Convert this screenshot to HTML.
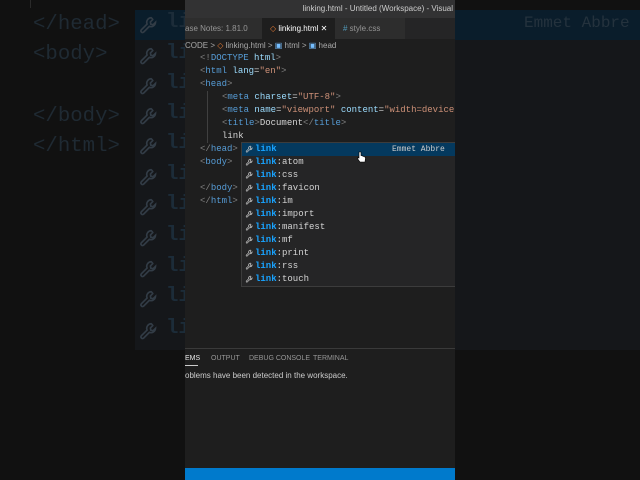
<!DOCTYPE html>
<html><head><style>
*{margin:0;padding:0;box-sizing:border-box}
body{width:640px;height:480px;background:#111;position:relative;overflow:hidden;font-family:"Liberation Sans",sans-serif}
.m{font-family:"Liberation Mono",monospace}
.abs{position:absolute;white-space:nowrap}
.bg{left:0;font-size:20.7px;color:#1f2a33;line-height:30px}
#c{position:absolute;left:185px;top:0;width:270px;height:480px;background:#1e1e1e;overflow:hidden}
.cl{position:absolute;font-size:9px;line-height:13px;color:#d4d4d4;white-space:nowrap;font-family:"Liberation Mono",monospace}
.t{color:#569cd6}.g{color:#808080}.a{color:#9cdcfe}.s{color:#ce9178}
#sg{position:absolute;left:56px;top:142px;width:220px;height:145px;background:#252526;border:1px solid #3c3c3c}
.r{height:13px;line-height:13px;font-size:9px;font-family:"Liberation Mono",monospace;color:#d4d4d4;padding-left:13px;position:relative}
.r b{font-weight:bold;color:#18a3ff}
.r svg{position:absolute;left:3px;top:2px}
</style></head><body>
<div class="abs" style="left:135px;top:10px;width:505px;height:340px;background:#15171a"></div>
<div class="abs" style="left:135px;top:10px;width:505px;height:30px;background:#0a1d2b"></div>
<div class="abs m" style="left:524px;top:14px;font-size:16px;color:#24323d">Emmet Abbre</div>
<div class="abs m bg" style="left:33px;top:10px">&lt;/head&gt;</div>
<div class="abs m bg" style="left:33px;top:40px">&lt;body&gt;</div>
<div class="abs m bg" style="left:33px;top:102px">&lt;/body&gt;</div>
<div class="abs m bg" style="left:33px;top:132px">&lt;/html&gt;</div>
<div id="wrs"></div>
<div class="abs" style="left:30px;top:0;width:1px;height:8px;background:#2a2a2a"></div>

<div id="c">
<div class="abs" style="left:0;top:0;width:270px;height:18px;background:#323233;color:#ccc;font-size:8px;line-height:18px;text-align:right;padding-right:2px">linking.html - Untitled (Workspace) - Visual</div>
<div class="abs" style="left:0;top:18px;width:270px;height:21px;background:#252526"></div>
<div class="abs" style="left:0;top:18px;width:77px;height:21px;background:#2d2d2d;color:#969696;font-size:8px;line-height:21px">ase Notes: 1.81.0</div>
<div class="abs" style="left:77px;top:18px;width:73px;height:21px;background:#1e1e1e;color:#fff;font-size:8px;line-height:21px;padding-left:8px"><span style="color:#e37933">&#9671;</span> linking.html &#10005;</div>
<div class="abs" style="left:150px;top:18px;width:70px;height:21px;background:#2d2d2d;color:#969696;font-size:8px;line-height:21px;padding-left:8px"><span style="color:#519aba">#</span> style.css</div>
<div class="abs" style="left:0;top:39px;color:#a9a9a9;font-size:8px;line-height:13px">CODE &gt; <span style="color:#e37933">&#9671;</span> linking.html &gt; <span style="color:#75beff">&#9635;</span> html &gt; <span style="color:#75beff">&#9635;</span> head</div>
<div class="abs" style="left:22px;top:91px;width:1px;height:52px;background:#404040"></div>
<div class="cl" style="left:15px;top:52px"><span class="g">&lt;!</span><span class="t">DOCTYPE</span> <span class="a">html</span><span class="g">&gt;</span></div>
<div class="cl" style="left:15px;top:65px"><span class="g">&lt;</span><span class="t">html</span> <span class="a">lang</span>=<span class="s">"en"</span><span class="g">&gt;</span></div>
<div class="cl" style="left:15px;top:78px"><span class="g">&lt;</span><span class="t">head</span><span class="g">&gt;</span></div>
<div class="cl" style="left:37px;top:91px"><span class="g">&lt;</span><span class="t">meta</span> <span class="a">charset</span>=<span class="s">"UTF-8"</span><span class="g">&gt;</span></div>
<div class="cl" style="left:37px;top:104px"><span class="g">&lt;</span><span class="t">meta</span> <span class="a">name</span>=<span class="s">"viewport"</span> <span class="a">content</span>=<span class="s">"width=device</span></div>
<div class="cl" style="left:37px;top:117px"><span class="g">&lt;</span><span class="t">title</span><span class="g">&gt;</span>Document<span class="g">&lt;/</span><span class="t">title</span><span class="g">&gt;</span></div>
<div class="cl" style="left:37px;top:130px">link</div>
<div class="cl" style="left:15px;top:143px"><span class="g">&lt;/</span><span class="t">head</span><span class="g">&gt;</span></div>
<div class="cl" style="left:15px;top:156px"><span class="g">&lt;</span><span class="t">body</span><span class="g">&gt;</span></div>
<div class="cl" style="left:15px;top:182px"><span class="g">&lt;/</span><span class="t">body</span><span class="g">&gt;</span></div>
<div class="cl" style="left:15px;top:195px"><span class="g">&lt;/</span><span class="t">html</span><span class="g">&gt;</span></div>
<div id="sg"></div>
<svg class="abs" style="left:172px;top:151px" width="9" height="12" viewBox="0 0 9 12"><path d="M2 1v6L1 6.5 0.8 8 3 11h5l0.5-4-1-1.5-1.5 0V5L4 4.5V1z" fill="#fff" stroke="#000" stroke-width=".6"/></svg>
<div class="abs" style="left:0;top:348px;width:270px;height:1px;background:#3a3a3a"></div>
<div class="abs" style="left:0;top:354px;color:#e7e7e7;font-size:7px;line-height:10px">EMS</div>
<div class="abs" style="left:0;top:365px;width:13px;height:1px;background:#ccc"></div>
<div class="abs" style="left:26px;top:354px;color:#969696;font-size:7px;line-height:10px">OUTPUT</div>
<div class="abs" style="left:64px;top:354px;color:#969696;font-size:7px;line-height:10px">DEBUG CONSOLE</div>
<div class="abs" style="left:128px;top:354px;color:#969696;font-size:7px;line-height:10px">TERMINAL</div>
<div class="abs" style="left:0;top:371px;color:#ccc;font-size:8px;line-height:10px">oblems have been detected in the workspace.</div>
<div class="abs" style="left:0;top:468px;width:270px;height:12px;background:#007acc"></div>
</div>
<script>
var W='<path d="M14.5 3a5 5 0 0 0-4.6 6.9L3.5 16.3a1.8 1.8 0 0 0 2.5 2.5l6.4-6.4A5 5 0 0 0 19.1 8l-2.6 2.6-2.5-.5-.5-2.5 2.6-2.6A5 5 0 0 0 14.5 3z" fill="none" stroke-width="1.8" stroke="';
var h='';[26,57,87,117,147,178,208,239,270,300,332].forEach(function(y){h+='<div class="abs" style="left:138px;top:'+(y-14)+'px;width:45px;height:28px"><svg width="22" height="22" viewBox="0 0 24 24" style="position:absolute;left:0;top:3px">'+W+'#323c46"/></svg><span class="m" style="position:absolute;left:28px;top:-1px;font-size:20.7px;color:#1c2c39;font-weight:bold">li</span></div>'});document.getElementById('wrs').outerHTML=h;
var items=['','atom','css','favicon','im','import','manifest','mf','print','rss','touch'],s='';
items.forEach(function(it,i){s+='<div class="r"'+(i==0?' style="background:#04395e"':'')+'><svg width="9" height="9" viewBox="0 0 24 24">'+W+'#c5c5c5"/></svg><b>link</b>'+(it?':'+it:'')+(i==0?'<span style="position:absolute;left:150px;color:#ccc;font-size:8px">Emmet Abbre</span>':'')+'</div>'});
document.getElementById('sg').innerHTML=s;
</script>
</body></html>
